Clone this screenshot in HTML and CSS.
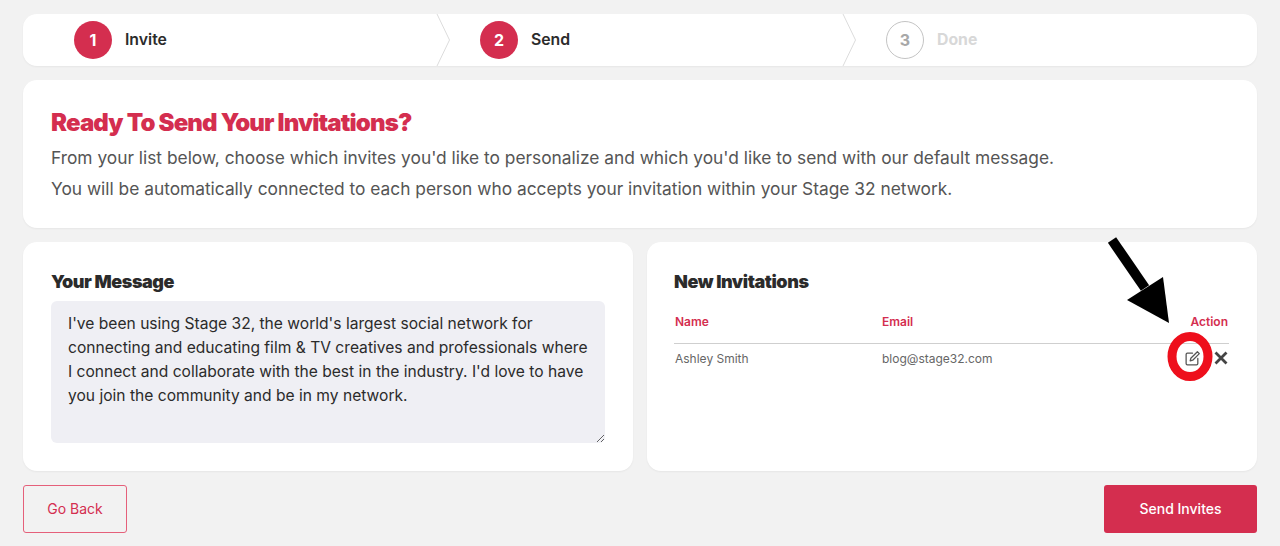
FILE: index.html
```html
<!DOCTYPE html>
<html lang="en">
<head>
  <meta charset="UTF-8" />
  <meta name="viewport" content="width=device-width, initial-scale=1.0"/>
  <title>Send Invitations</title>
  <link rel="stylesheet" href="styles.css">
</head>
<body>

<nav class="stepper">
  <div class="step">
    <span class="step-num">1</span>
    <span class="step-label">Invite</span>
    <svg class="step-chevron" viewBox="0 0 14 52" width="14" height="52"><path d="M1 0 L13.5 26 L1 52" fill="none" stroke="#dcdcdc" stroke-width="1"/></svg>
  </div>
  <div class="step">
    <span class="step-num">2</span>
    <span class="step-label">Send</span>
    <svg class="step-chevron" viewBox="0 0 14 52" width="14" height="52"><path d="M1 0 L13.5 26 L1 52" fill="none" stroke="#dcdcdc" stroke-width="1"/></svg>
  </div>
  <div class="step step-off">
    <span class="step-num">3</span>
    <span class="step-label">Done</span>
  </div>
</nav>

<section class="card intro">
  <h1>Ready To Send Your Invitations?</h1>
  <p>From your list below, choose which invites you'd like to personalize and which you'd like to send with our default message.</p>
  <p>You will be automatically connected to each person who accepts your invitation within your Stage 32 network.</p>
</section>

<main class="columns">
  <section class="card panel">
    <h2>Your Message</h2>
    <textarea class="message">I've been using Stage 32, the world's largest social network for connecting and educating film &amp; TV creatives and professionals where I connect and collaborate with the best in the industry. I'd love to have you join the community and be in my network.</textarea>
  </section>

  <section class="card panel panel-invites">
    <h2>New Invitations</h2>
    <table class="invites">
      <thead>
        <tr><th class="col-name">Name</th><th>Email</th><th class="col-action">Action</th></tr>
      </thead>
      <tbody>
        <tr>
          <td>Ashley Smith</td>
          <td>blog@stage32.com</td>
          <td class="col-action">
            <span class="actions">
              <svg class="icon-edit" viewBox="0 0 16 16" width="17" height="17"><path d="M8 3H3.2C2.5 3 2 3.5 2 4.2v8.6c0 .7.5 1.2 1.2 1.2h8.6c.7 0 1.2-.5 1.2-1.2V8" fill="none" stroke="#555" stroke-width="1.2" stroke-linecap="round"/><path d="M12.6 1.6l1.8 1.8L8.2 9.6l-2.4.6.6-2.4z" fill="none" stroke="#555" stroke-width="1.2" stroke-linejoin="round"/></svg>
              <svg class="icon-x" viewBox="0 0 14 14" width="14" height="14"><path d="M1.5 1.5l11 11M12.5 1.5l-11 11" fill="none" stroke="#444" stroke-width="2.8"/></svg>
            </span>
          </td>
        </tr>
      </tbody>
    </table>
  </section>
</main>

<footer class="buttons">
  <a class="btn btn-back">Go Back</a>
  <a class="btn btn-send">Send Invites</a>
</footer>

<!-- annotation drawn on top of the screenshot -->
<svg class="callout" viewBox="0 0 110 150" width="110" height="150">
  <path d="M5 4 L38 52" stroke="#000" stroke-width="10" fill="none"/>
  <path d="M56 41 L62 87 L20 64 Z" fill="#000"/>
  <ellipse cx="83" cy="120.5" rx="18" ry="20" fill="none" stroke="#ee0f1c" stroke-width="9"/>
</svg>

</body>
</html>
```

FILE: styles.css
```css
:root {
  --primary: #d42e4f;
  --text: #2b2b2b;
  --muted: #555;
  --background: #f2f2f2;
  --card-bg: #fff;
  --border-radius: 14px;
}

* {
  margin: 0;
  padding: 0;
  box-sizing: border-box;
}

html, body {
  height: 546px;
  overflow: hidden;
}

body {
  font-family: 'Inter', sans-serif;
  background: var(--background);
  color: var(--text);
  padding: 14px 23px 0;
  position: relative;
}

.stepper {
  display: flex;
  height: 52px;
  padding-left: 21px;
  background: var(--card-bg);
  border-radius: var(--border-radius);
  box-shadow: 0 1px 2px rgba(0, 0, 0, 0.05);
}

.step {
  position: relative;
  flex: none;
  width: 406px;
  padding: 0 0 1px 30px;
  display: flex;
  align-items: center;
  gap: 13px;
}

.step-num {
  width: 38px;
  height: 38px;
  border-radius: 50%;
  background: var(--primary);
  color: #fff;
  font-size: 16px;
  font-weight: 700;
  display: flex;
  align-items: center;
  justify-content: center;
}

.step-label {
  font-size: 15.8px;
  font-weight: 600;
}

.step-chevron {
  position: absolute;
  top: 0;
  right: 0;
}

.step-off .step-num {
  background: none;
  border: 1px solid #c4c4c4;
  color: #a8a8a8;
}

.step-off .step-label {
  color: #d8d8d8;
  font-weight: 700;
}

.card {
  background: var(--card-bg);
  border-radius: var(--border-radius);
  box-shadow: 0 1px 2px rgba(0, 0, 0, 0.05);
}

.intro {
  margin-top: 14px;
  height: 148px;
  padding: 28px 28px 0;
}

.intro h1 {
  font-size: 24px;
  line-height: 30px;
  font-weight: 900;
  letter-spacing: -0.85px;
  color: var(--primary);
  margin-bottom: 4px;
}

.intro p {
  font-size: 17.33px;
  line-height: 31px;
  color: var(--muted);
}

.columns {
  margin-top: 14px;
  display: grid;
  grid-template-columns: 1fr 1fr;
  gap: 14px;
}

.panel {
  height: 229px;
  padding: 28px 28px 0;
}

.panel-invites {
  padding-left: 27px;
}

.panel h2 {
  font-size: 18px;
  line-height: 24px;
  font-weight: 900;
  letter-spacing: -0.45px;
}

.message {
  display: block;
  width: 100%;
  height: 142px;
  margin-top: 7px;
  padding: 11px 17px;
  border: 0;
  border-radius: 6px;
  background: #efeff4;
  color: var(--text);
  font-family: 'Inter', sans-serif;
  font-size: 15.6px;
  line-height: 24px;
}

.invites {
  width: 100%;
  margin-top: 12px;
  border-collapse: collapse;
  font-size: 12px;
}

.invites th {
  text-align: left;
  font-weight: 600;
  color: var(--primary);
  height: 37px;
  padding-bottom: 5px;
  border-bottom: 1px solid #cfcfcf;
}

.invites td {
  height: 30px;
  color: #666;
}

.invites th:first-child, .invites td:first-child {
  width: 208px;
  padding-left: 1px;
}

.invites .col-action {
  text-align: right;
  padding-right: 1px;
}

.actions {
  display: inline-flex;
  align-items: center;
  gap: 13px;
  vertical-align: middle;
}

.buttons {
  margin-top: 14px;
  display: flex;
  justify-content: space-between;
}

.btn {
  height: 48px;
  padding-bottom: 1px;
  display: flex;
  align-items: center;
  justify-content: center;
  font-size: 14px;
  font-weight: 500;
  border-radius: 3px;
}

.btn-back {
  width: 104px;
  border: 1px solid #e5607a;
  color: var(--primary);
  font-weight: 400;
}

.btn-send {
  width: 153px;
  background: var(--primary);
  color: #fff;
}

.callout {
  position: absolute;
  left: 1107px;
  top: 236px;
}
```
